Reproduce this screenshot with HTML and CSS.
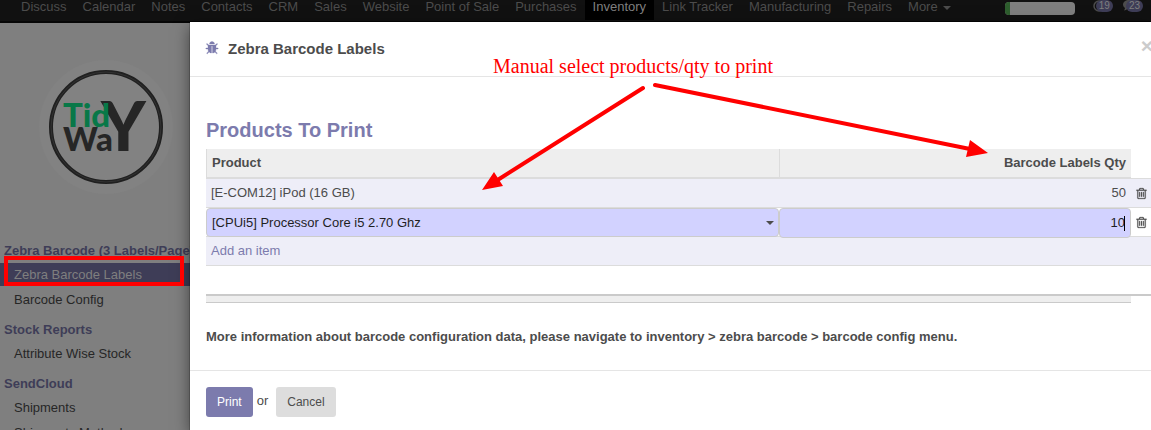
FILE: index.html
```html
<!DOCTYPE html>
<html lang="en">
<head>
<meta charset="utf-8">
<title>Zebra Barcode Labels</title>
<link rel="stylesheet" href="styles.css">
</head>
<body>
<svg class="symbols" aria-hidden="true">
  <symbol id="trash" viewBox="0 0 1792 1792"><path d="M704 736v576q0 14-9 23t-23 9h-64q-14 0-23-9t-9-23v-576q0-14 9-23t23-9h64q14 0 23 9t9 23zm256 0v576q0 14-9 23t-23 9h-64q-14 0-23-9t-9-23v-576q0-14 9-23t23-9h64q14 0 23 9t9 23zm256 0v576q0 14-9 23t-23 9h-64q-14 0-23-9t-9-23v-576q0-14 9-23t23-9h64q14 0 23 9t9 23zm128 724v-948h-896v948q0 22 7 40.5t14.5 27 10.5 8.5h832q3 0 10.5-8.5t14.5-27 7-40.5zm-672-1076h448l-48-117q-7-9-17-11h-317q-10 2-17 11zm928 32v64q0 14-9 23t-23 9h-96v948q0 83-47 143.5t-113 60.5h-832q-66 0-113-58.5t-47-141.5v-952h-96q-14 0-23-9t-9-23v-64q0-14 9-23t23-9h309l70-167q15-37 54-63t79-26h320q40 0 79 26t54 63l70 167h309q14 0 23 9t9 23z"/></symbol>
</svg>

<nav class="navbar">
  <a href="#">Discuss</a>
  <a href="#">Calendar</a>
  <a href="#">Notes</a>
  <a href="#">Contacts</a>
  <a href="#">CRM</a>
  <a href="#">Sales</a>
  <a href="#">Website</a>
  <a href="#">Point of Sale</a>
  <a href="#">Purchases</a>
  <a href="#" class="active">Inventory</a>
  <a href="#">Link Tracker</a>
  <a href="#">Manufacturing</a>
  <a href="#">Repairs</a>
  <a href="#">More <span class="caret"></span></a>
  <div class="systray">
    <div class="progress"><div class="progress-bar"></div></div>
    <button class="tray-button" type="button" aria-label="Activities">
      <svg class="tray-icon" viewBox="0 0 12 12"><circle cx="6" cy="6" r="5" fill="none" stroke="currentColor" stroke-width="1.5"/></svg>
      <span class="badge">19</span>
    </button>
    <button class="tray-button" type="button" aria-label="Messages">
      <svg class="tray-icon" viewBox="0 0 12 12"><path fill="currentColor" d="M6 0C2.700 0 0 2 0 4.600c0 1.400.8 2.600 2 3.500C1.900 9 1.500 9.800 1 10.500c1.400-.2 2.600-.8 3.400-1.500L6 9.200c3.300 0 6-2 6-4.600S9.300 0 6 0z"/></svg>
      <span class="badge">23</span>
    </button>
  </div>
</nav>

<aside class="sidebar">
  <svg class="logo" viewBox="0 0 134 134" role="img" aria-label="TidyWay">
    <circle cx="67" cy="67" r="67" fill="#828282"/>
    <circle cx="67" cy="67" r="55" fill="none" stroke="#202020" stroke-width="4"/>
    <circle cx="67" cy="67" r="55" fill="none" stroke="#333" stroke-width="1"/>
    <text class="logo-dark logo-big" x="62" y="91">Y</text>
    <text class="logo-dark" x="24" y="91">W</text>
    <text class="logo-dark" x="57" y="91">a</text>
    <text class="logo-green" x="24" y="67">Tid</text>
  </svg>
  <h2>Zebra Barcode (3 Labels/Page)</h2>
  <a href="#" class="selected">Zebra Barcode Labels</a>
  <a href="#">Barcode Config</a>
  <h2>Stock Reports</h2>
  <a href="#">Attribute Wise Stock</a>
  <h2>SendCloud</h2>
  <a href="#">Shipments</a>
  <a href="#">Shipments Methods</a>
</aside>

<main class="modal" role="dialog" aria-labelledby="modal-title">
  <header class="modal-header">
    <svg class="bug" viewBox="0 0 1792 1792" aria-hidden="true"><path d="M1696 960q0 26-19 45t-45 19h-224q0 171-67 290l208 209q19 19 19 45t-19 45q-18 19-45 19t-45-19l-198-197q-5 5-15 13t-42 28.5-65 36.500-82 29-97 13v-896h-128v896q-51 0-101.500-13.500t-87-33-66-39-43.500-32.500l-15-14-183 207q-20 21-48 21-24 0-43-16-19-18-20.500-44.500t15.500-46.500l202-227q-58-114-58-274h-224q-26 0-45-19t-19-45 19-45 45-19h224v-294l-173-173q-19-19-19-45t19-45 45-19 45 19l173 173h844l173-173q19-19 45-19t45 19 19 45-19 45l-173 173v294h224q26 0 45 19t19 45zm-480-576h-640q0-133 93.500-226.500t226.500-93.500 226.500 93.500 93.500 226.500z"/></svg>
    <h1 id="modal-title">Zebra Barcode Labels</h1>
    <button class="close" type="button" aria-label="Close">×</button>
  </header>
  <section class="modal-body">
    <h2>Products To Print</h2>
    <table class="lines">
      <colgroup><col><col class="col-qty"><col class="col-delete"></colgroup>
      <thead>
        <tr><th scope="col">Product</th><th scope="col" class="number">Barcode Labels Qty</th><td></td></tr>
      </thead>
      <tbody>
        <tr class="odd">
          <td>[E-COM12] iPod (16 GB)</td>
          <td class="number">50</td>
          <td class="delete"><button type="button" aria-label="Delete iPod"><svg><use href="#trash"/></svg></button></td>
        </tr>
        <tr>
          <td class="edit"><div class="field"><input type="text" aria-label="Product" value="[CPUi5] Processor Core i5 2.70 Ghz"><span class="caret"></span></div></td>
          <td class="edit"><div class="field field-qty"><input type="text" aria-label="Barcode Labels Qty" value="10"><span class="cursor"></span></div></td>
          <td class="delete"><button type="button" aria-label="Delete Processor"><svg><use href="#trash"/></svg></button></td>
        </tr>
        <tr class="odd"><td colspan="3"><a href="#">Add an item</a></td></tr>
        <tr class="blank"><td colspan="3"></td></tr>
      </tbody>
      <tfoot><tr><td></td><td></td><td></td></tr></tfoot>
    </table>
    <p>More information about barcode configuration data, please navigate to inventory &gt; zebra barcode &gt; barcode config menu.</p>
  </section>
  <footer class="modal-footer">
    <button class="btn primary" type="button">Print</button>
    <span>or</span>
    <button class="btn" type="button">Cancel</button>
  </footer>
</main>

<div class="highlight"></div>
<div class="note">Manual select products/qty to print</div>
<svg class="arrows" width="520" height="120" viewBox="475 78 520 120" aria-hidden="true">
  <g stroke="#f00" stroke-width="4" stroke-linecap="round">
    <path d="M643 88L496 181M655 85L970 149"/>
  </g>
  <path fill="#f00" d="M482 190L494 172L503 186zM988 153L970 140L966 157z"/>
</svg>
</body>
</html>
```

FILE: styles.css
```css
* {
  box-sizing: border-box;
}

body {
  margin: 0;
  height: 100vh;
  overflow: hidden;
  position: relative;
  background: #7f7f7f;
  color: #4c4c4c;
  font: 13px/20px "Liberation Sans", Arial, sans-serif;
}

h1, h2, p {
  margin: 0;
}

a {
  text-decoration: none;
}

button {
  font-family: inherit;
  padding: 0;
  border: 0;
  background: none;
  color: inherit;
}

.symbols {
  display: none;
}

.caret {
  display: inline-block;
  border: 4px solid transparent;
  border-top-color: currentColor;
  border-bottom: 0;
}

/* Top menu */
.navbar {
  display: flex;
  align-items: flex-start;
  height: 23px;
  padding-left: 13px;
  background: #111;
  border-bottom: 2px solid #060606;
  white-space: nowrap;
}

.navbar > a {
  padding: 0 8px 6px;
  line-height: 14px;
  color: #4c4c4c;
}

.navbar > a.active {
  background: #000;
  color: #7f7f7f;
}

.navbar .caret {
  margin-left: 2px;
  vertical-align: 1px;
}

.systray {
  display: flex;
  align-items: flex-start;
  margin-left: auto;
  padding-right: 8px;
}

.progress {
  width: 70px;
  height: 13px;
  margin: 2px 18px 0 0;
  border-radius: 4px;
  background: #7f7f7f;
  overflow: hidden;
}

.progress-bar {
  width: 5px;
  height: 100%;
  background: #2e5e2e;
}

.tray-button {
  display: flex;
  color: #4c4c4c;
}

.tray-button + .tray-button {
  margin-left: 10px;
}

.tray-icon {
  width: 12px;
  height: 12px;
}

.badge {
  margin-left: -9px;
  padding: 0 3px;
  border-radius: 6px;
  background: #3e3d57;
  color: #7f7f7f;
  font-size: 10px;
  line-height: 12px;
}

/* Side menu */
.sidebar {
  width: 220px;
  padding-top: 37px;
}

.logo {
  display: block;
  width: 134px;
  height: 134px;
  margin: 0 0 47px 39px;
  font: 900 33px Lato, sans-serif;
}

.logo-dark {
  fill: #262626;
}

.logo-big {
  font-size: 68px;
}

.logo-green {
  fill: #087848;
}

.sidebar h2 {
  margin-top: 9px;
  padding-left: 4px;
  font-size: 13px;
  line-height: 20px;
  color: #3e3d57;
  white-space: nowrap;
}

.logo + h2 {
  margin-top: 0;
}

.sidebar a {
  display: block;
  margin-top: 2px;
  padding-left: 14px;
  line-height: 23px;
  color: #262626;
}

.sidebar a.selected {
  background: #3e3d57;
  color: #7f7f7f;
}

/* Dialog */
.modal {
  position: absolute;
  inset: 22px 0 0 190px;
  background: #fff;
  box-shadow: 0 5px 15px rgba(0, 0, 0, .5), 0 0 1px #000;
}

.modal-header {
  display: flex;
  align-items: center;
  height: 55px;
  padding-left: 15px;
  border-bottom: 1px solid #e5e5e5;
  overflow: hidden;
}

.bug {
  width: 14px;
  height: 14px;
  margin: 0 9px 2px 0;
  fill: #7c7bad;
  stroke: #7c7bad;
  stroke-width: 40px;
}

.modal-header h1 {
  font-size: 15px;
}

.close {
  margin: 0 -2px 7px auto;
  font-size: 21px;
  font-weight: bold;
  line-height: 20px;
  color: #ccc;
}

.modal-body {
  padding: 43px 0 23px 16px;
}

.modal-body h2 {
  margin-bottom: 9px;
  font-size: 20px;
  line-height: 20px;
  color: #7c7bad;
}

.modal-body p {
  margin-top: 24px;
  font-weight: bold;
}

.modal-footer {
  display: flex;
  padding: 16px;
  border-top: 1px solid #e5e5e5;
}

.modal-footer span {
  margin: 4px 8px 0 4px;
}

.btn {
  padding: 0 11px;
  border-radius: 3px;
  background: #ddd;
  font-size: 12px;
  line-height: 30px;
}

.btn.primary {
  background: #7c7bad;
  color: #fff;
}

/* Order lines */
.lines {
  width: 100%;
  table-layout: fixed;
  border-collapse: separate;
  border-spacing: 0;
}

.col-qty {
  width: 352px;
}

.col-delete {
  width: 20px;
}

.lines td,
.lines th {
  height: 29px;
  padding: 0 5px;
  border-bottom: 1px solid #dcdcdc;
  text-align: left;
}

.lines th {
  height: 30px;
  border-bottom-width: 2px;
  border-left: 1px solid #dcdcdc;
  background: #eee;
}

.lines thead td {
  height: 30px;
}

.lines .number {
  text-align: right;
}

.lines .odd td {
  background: #eeeef8;
}

.lines a {
  color: #7c7bad;
}

.lines .edit {
  padding: 0;
  vertical-align: top;
}

.field {
  position: relative;
  display: flex;
  align-items: center;
  height: 29px;
  margin-bottom: -1px;
  padding: 0 4px 0 5px;
  border: 1px solid #ccc;
  border-radius: 4px;
  background: #d2d2ff;
}

.field input {
  flex: 1;
  min-width: 0;
  padding: 0;
  border: 0;
  outline: 0;
  background: none;
  color: #1f1f1f;
  font: inherit;
}

.field-qty {
  height: 30px;
  margin-bottom: -2px;
  padding-right: 5px;
}

.field-qty input {
  text-align: right;
}

.cursor {
  width: 1px;
  height: 15px;
  margin-left: -1px;
  background: #000;
}

.lines .delete {
  padding: 0 0 0 4px;
}

.delete button,
.delete svg {
  display: block;
}

.delete svg {
  width: 13px;
  height: 13px;
  fill: #4c4c4c;
  stroke: #4c4c4c;
  stroke-width: 30px;
}

.lines .blank td {
  height: 30px;
  border-bottom: 2px solid #cacaca;
}

.lines tfoot td {
  height: 7px;
  padding: 0;
  background: #eee;
  border-bottom: 1px solid #cacaca;
}

.lines thead td:last-child {
  background: none;
}

.lines tfoot td:last-child {
  background: none;
  border: 0;
}

/* Annotations */
.highlight {
  position: absolute;
  left: 4px;
  top: 256px;
  width: 180px;
  height: 30px;
  border: 4px solid #f00;
}

.note {
  position: absolute;
  left: 493px;
  top: 54px;
  color: #f00;
  font: 20px/24px "Liberation Serif", serif;
  white-space: nowrap;
}

.arrows {
  position: absolute;
  left: 475px;
  top: 78px;
}
```
